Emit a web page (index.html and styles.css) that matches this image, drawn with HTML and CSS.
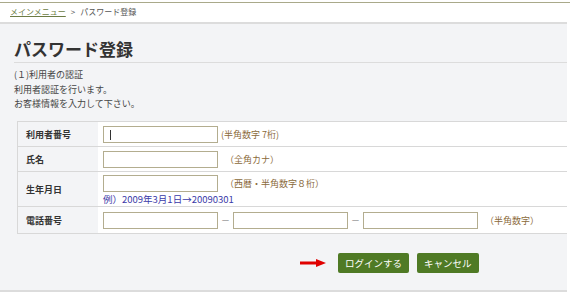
FILE: index.html
```html
<!DOCTYPE html>
<html lang="ja">
<head>
<meta charset="utf-8">
<link rel="stylesheet" href="styles.css">
</head>
<body>
<div class="header">
  <div class="breadcrumb"><a href="#" class="crumb-link">メインメニュー</a><span class="sep">&gt;</span>パスワード登録</div>
</div>
<div class="panel">
  <h1 class="title">パスワード登録</h1>
  <div class="intro">
    <p>(１)利用者の認証</p>
    <p>利用者認証を行います。</p>
    <p>お客様情報を入力して下さい。</p>
  </div>
  <table class="form">
    <tr class="r1">
      <th>利用者番号</th>
      <td><div class="line"><span class="input caret"></span><span class="note n1">(半角数字 7桁)</span></div></td>
    </tr>
    <tr class="r2">
      <th>氏名</th>
      <td><div class="line"><span class="input"></span><span class="note">（全角カナ）</span></div></td>
    </tr>
    <tr class="r3">
      <th>生年月日</th>
      <td><div class="line top"><span class="input"></span><span class="note">（西暦・半角数字８桁）</span></div>
        <div class="example">例）2009年3月1日→20090301</div></td>
    </tr>
    <tr class="r4">
      <th>電話番号</th>
      <td><div class="line"><span class="input"></span><span class="dash">－</span><span class="input"></span><span class="dash">－</span><span class="input"></span><span class="note">（半角数字）</span></div></td>
    </tr>
  </table>
  <div class="actions">
    <svg class="arrow" width="26" height="8" viewBox="0 0 26 8"><rect x="0" y="2.5" width="17" height="3" fill="#e00000"/><polygon points="16,0 26,4 16,8" fill="#e00000"/></svg>
    <span class="btn">ログインする</span>
    <span class="btn">キャンセル</span>
  </div>
</div>
</body>
</html>
```
FILE: styles.css
```css
html, body { margin: 0; padding: 0; background: #fff; }
body {
  font-family: "Noto Sans CJK JP", "Noto Sans", sans-serif;
  color: #333;
  font-size: 10px;
  width: 570px;
  height: 295px;
  overflow: hidden;
  border-top: 2px solid #fff;
}
.header {
  border-top: 1px solid #a9a98a;
  height: 20px;
  box-sizing: border-box;
  background: #fff;
}
.breadcrumb {
  padding-left: 10px;
  line-height: 16px;
  padding-top: 1px;
  font-size: 8px;
  color: #555;
}
.crumb-link { color: #6c7c44; text-decoration: underline; }
.sep { margin: 0 5px 0 5px; }
.panel {
  border-top: 2px solid #dcdcdc;
  border-bottom: 2px solid #dcdcdc;
  background: #f3f4f6;
  height: 266px;
  margin-right: 3px;
  padding: 0 0 0 14px;
  box-sizing: content-box;
}
.title {
  margin: 0;
  padding-top: 12px;
  font-size: 17px;
  line-height: 26px;
  font-weight: bold;
  color: #333;
  height: 26px;
  border-bottom: 1px solid #dcdcdc;
}
.intro { padding-top: 5px; }
.intro p { margin: 0; line-height: 14.7px; font-size: 9px; color: #444; }
.form {
  margin: 9px 0 0 3px;
  border-collapse: collapse;
  width: 550px;
  font-size: 9px;
}
.form th {
  width: 72px;
  text-align: left;
  padding: 0 0 0 8px;
  background: #f3f4f6;
  font-weight: bold;
  color: #333;
  border: 1px solid #d8d8d8;
  border-right: none;
  font-size: 9px;
}
.form td {
  background: #fff;
  border-top: 1px solid #d8d8d8;
  border-bottom: 1px solid #d8d8d8;
  padding: 0 0 0 5px;
}
.r1 { height: 25px; }
.r2 { height: 25px; }
.r3 { height: 35px; }
.r4 { height: 27px; }
.line { display: flex; align-items: center; }
.line.top { margin-top: 2px; }
.input {
  display: block;
  width: 113px;
  height: 15px;
  border: 1px solid #b3ad8f;
  background: #fff;
  position: relative;
}
.caret::after {
  content: "";
  position: absolute;
  left: 6px;
  top: 3px;
  width: 1px;
  height: 10px;
  background: #333;
}
.note { color: #8a6a3a; margin-left: 7px; font-size: 9px; }
.note.n1 { margin-left: 3px; }
.dash { color: #888; width: 15px; text-align: center; }
.example { color: #3a3aa8; font-size: 9.5px; margin-top: 1px; line-height: 13px; }
.actions {
  display: flex;
  align-items: center;
  padding-left: 286px;
  margin-top: 19px;
}
.arrow { margin-right: 12px; }
.btn {
  background: #4f7a25;
  color: #fff;
  font-size: 9.5px;
  height: 20px;
  line-height: 20px;
  padding: 0 7px;
  border-radius: 2px;
  margin-right: 8px;
  white-space: nowrap;
}
```
